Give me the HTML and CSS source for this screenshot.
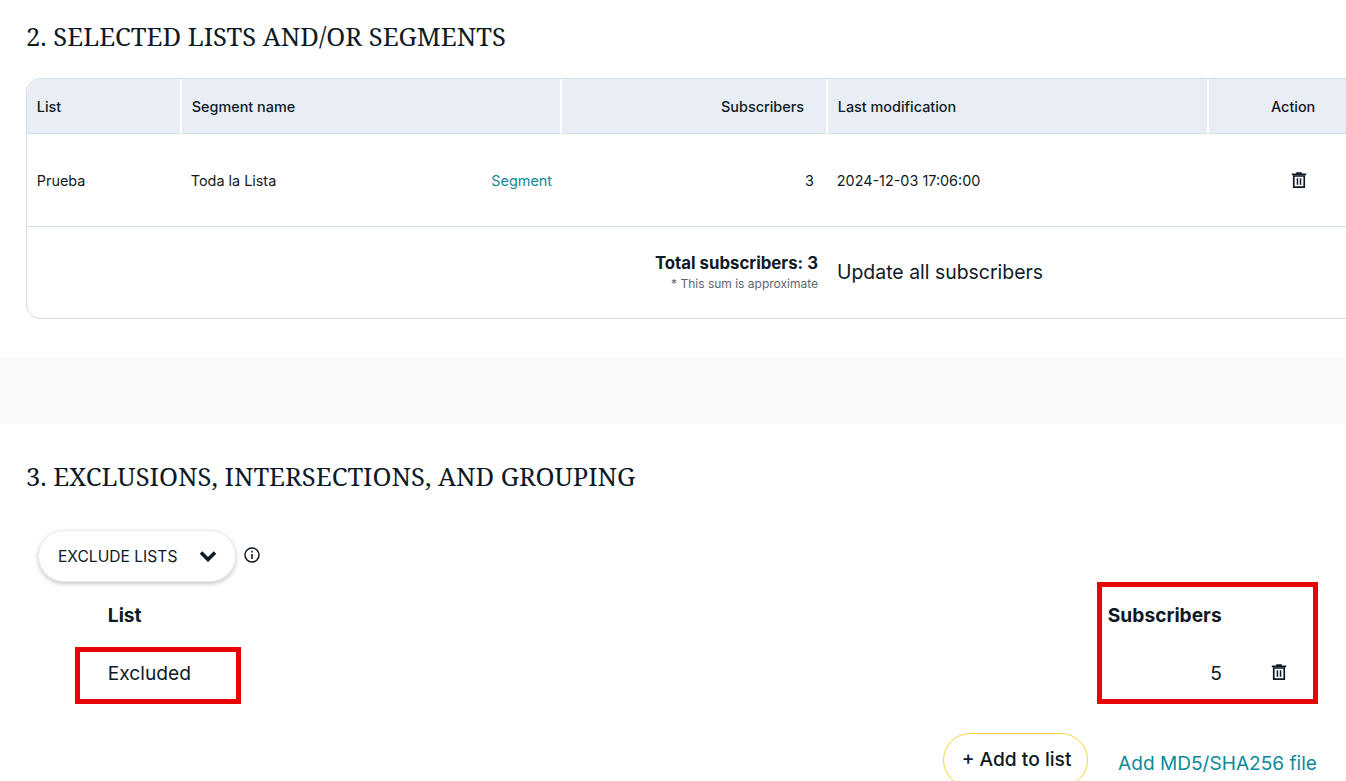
FILE: index.html
```html
<!DOCTYPE html>
<html lang="en">
<head>
<meta charset="utf-8">
<title>Campaign lists</title>
<link rel="stylesheet" href="styles.css">
</head>
<body>
<svg class="sprite" width="0" height="0" aria-hidden="true">
  <symbol id="trash" viewBox="0 0 16 16">
    <path d="M5.2 0.2h5.6v1.3h4.4v1.7H0.8V1.5h4.4z"/>
    <path d="M1.9 3.2h12.2V16H1.9zM3.6 4.8v9.5h8.8V4.8z" fill-rule="evenodd"/>
    <path d="M5.7 6.2h1.5v6.6H5.7zM8.8 6.2h1.5v6.6H8.8z"/>
  </symbol>
</svg>
<main class="page">
  <section class="section section-lists">
    <h2 class="title">2. SELECTED LISTS AND/OR SEGMENTS</h2>
    <div class="table-card">
      <table class="data-table">
        <colgroup>
          <col class="col-list"><col class="col-segment"><col class="col-subs"><col class="col-date"><col class="col-action">
        </colgroup>
        <thead>
          <tr>
            <th>List</th>
            <th>Segment name</th>
            <th class="right head-subs">Subscribers</th>
            <th>Last modification</th>
            <th class="action-head">Action</th>
          </tr>
        </thead>
        <tbody>
          <tr class="row">
            <td>Prueba</td>
            <td>
              <div class="segment-cell"><span>Toda la Lista</span><a class="teal" href="#">Segment</a></div>
            </td>
            <td class="right">3</td>
            <td>2024-12-03 17:06:00</td>
            <td class="action-cell"><svg class="icon-trash"><use href="#trash"/></svg></td>
          </tr>
        </tbody>
        <tfoot>
          <tr class="total-row">
            <td colspan="3" class="total">
              <div class="total-value">Total subscribers: 3</div>
              <div class="total-note">* This sum is approximate</div>
            </td>
            <td colspan="2" class="update">Update all subscribers</td>
          </tr>
        </tfoot>
      </table>
    </div>
  </section>

  <div class="band"></div>

  <section class="section section-exclude">
    <h2 class="title">3. EXCLUSIONS, INTERSECTIONS, AND GROUPING</h2>
    <div class="filter-row">
      <button class="dropdown" type="button">
        <span>EXCLUDE LISTS</span>
        <svg class="chevron" viewBox="0 0 18 12"><path d="M2 2.5l7 7 7-7" fill="none" stroke="currentColor" stroke-width="3.6"/></svg>
      </button>
      <svg class="info" viewBox="0 0 16 16">
        <circle cx="8" cy="8" r="7" fill="none" stroke="currentColor" stroke-width="1.5"/>
        <path d="M7.2 3.8h1.6v1.6H7.2zM7.2 6.9h1.6v5.2H7.2z"/>
      </svg>
    </div>
    <div class="exclude-grid">
      <div class="exclude-head">List</div>
      <div class="exclude-head">Subscribers</div>
      <div class="exclude-name">Excluded</div>
      <div class="exclude-count">
        <span class="count">5</span>
        <svg class="icon-trash"><use href="#trash"/></svg>
      </div>
      <div class="mark mark-name"></div>
      <div class="mark mark-subs"></div>
    </div>
    <div class="actions">
      <button class="add-btn" type="button">+ Add to list</button>
      <a class="teal file-link" href="#">Add MD5/SHA256 file</a>
    </div>
  </section>
</main>
</body>
</html>
```
FILE: styles.css
```css
* { box-sizing: border-box; }
html, body { margin: 0; height: 781px; overflow: hidden; background: #fff; }
body { font-family: Inter, "Liberation Sans", sans-serif; color: #0e1a26; }
.sprite { position: absolute; }
.page { width: 1346px; height: 781px; overflow: hidden; }
.section { padding-left: 26px; }
.title {
  margin: 0;
  font-family: "Noto Serif", "Liberation Serif", serif;
  font-weight: 400;
  font-size: 25.6px;
  line-height: 32px;
  color: #0e1a26;
}
.section-lists { padding-top: 21px; height: 357px; }
.table-card {
  margin-top: 25px;
  width: 1351px;
  height: 241px;
  border: 1px solid #cfdeeb;
  border-radius: 14px;
  overflow: hidden;
}
.data-table { width: 1351px; border-collapse: collapse; table-layout: fixed; font-size: 14.4px; }
.col-list { width: 154px; }
.col-segment { width: 380px; }
.col-subs { width: 266px; }
.col-date { width: 381px; }
.col-action { width: 170px; }
.data-table th {
  height: 54px;
  padding: 2px 10px 0 9.8px;
  background: #e9eef5;
  border-bottom: 1px solid #cfdeeb;
  border-right: 2px solid #fff;
  font-size: 14.4px;
  font-weight: 500;
  text-align: left;
}
.data-table th:last-child { border-right: 0; }
.data-table th.right, .data-table td.right { text-align: right; }
.data-table th.head-subs { padding-right: 22px; }
.data-table th.action-head { text-align: left; padding-left: 62px; }
.data-table td { padding: 0 10px 0 9.8px; }
.row td { height: 93px; border-bottom: 1px solid #cfdeeb; padding-top: 2px; }
.data-table td.right { padding-right: 13px; }
.segment-cell { display: flex; justify-content: space-between; }
.segment-cell .teal { margin-right: -1px; }
.teal { color: #0c8a99; text-decoration: none; }
.row td.action-cell { padding: 0 0 0 83px; line-height: 0; }
.icon-trash { width: 16px; height: 16px; fill: #0e1a26; display: block; }
.total-row td { height: 92px; }
.data-table td.total { text-align: right; padding-right: 9px; }
.total-value { font-size: 16.8px; font-weight: 700; line-height: 20px; }
.total-note { font-size: 12px; line-height: 16px; color: #5b6571; margin-top: 3px; }
.data-table td.update { font-size: 19.45px; padding-left: 10px; }
.band { height: 67px; background: #fafafa; }
.section-exclude { padding-top: 37px; position: relative; height: 357px; }
.filter-row { display: flex; align-items: center; gap: 8px; margin-top: 37px; padding-left: 12px; }
.dropdown {
  display: flex;
  align-items: center;
  justify-content: space-between;
  width: 198px;
  height: 52px;
  padding: 0 18px 0 19px;
  background: #fff;
  border: 1px solid #ececec;
  border-radius: 26px;
  box-shadow: 0 2px 4px rgba(0, 0, 0, 0.22);
  font: 400 15.6px Inter, "Liberation Sans", sans-serif;
  color: #0e1a26;
}
.chevron { width: 18px; height: 12px; color: #0e1a26; }
.info { width: 16px; height: 16px; margin-bottom: 3px; fill: currentColor; color: #0e1a26; }
.exclude-grid {
  position: relative;
  display: grid;
  grid-template-columns: 1000px 210px;
  grid-template-rows: 22px 22px;
  row-gap: 36px;
  margin-top: 22px;
  padding-left: 81.8px;
  font-size: 19.2px;
}
.exclude-head { font-weight: 700; line-height: 22px; }
.exclude-name { line-height: 22px; }
.exclude-count { display: flex; align-items: center; line-height: 22px; }
.count { width: 114px; text-align: right; }
.exclude-count .icon-trash { margin: -2px 0 0 49px; }
.mark { position: absolute; border: 5px solid #e60505; }
.mark-name { left: 49px; top: 43px; width: 166px; height: 57px; }
.mark-subs { left: 1071px; top: -22px; width: 221px; height: 122px; }
.actions {
  display: flex;
  justify-content: flex-end;
  align-items: flex-start;
  gap: 30px;
  margin-top: 49px;
  padding-right: 29px;
}
.add-btn {
  width: 145px;
  height: 54px;
  padding: 0 0 3px 2px;
  background: #fff;
  border: 1px solid #f8d43c;
  border-radius: 27px;
  font: 500 19.2px Inter, "Liberation Sans", sans-serif;
  color: #0e1a26;
}
.file-link { font-size: 19.1px; line-height: 22px; margin-top: 19px; }
```
